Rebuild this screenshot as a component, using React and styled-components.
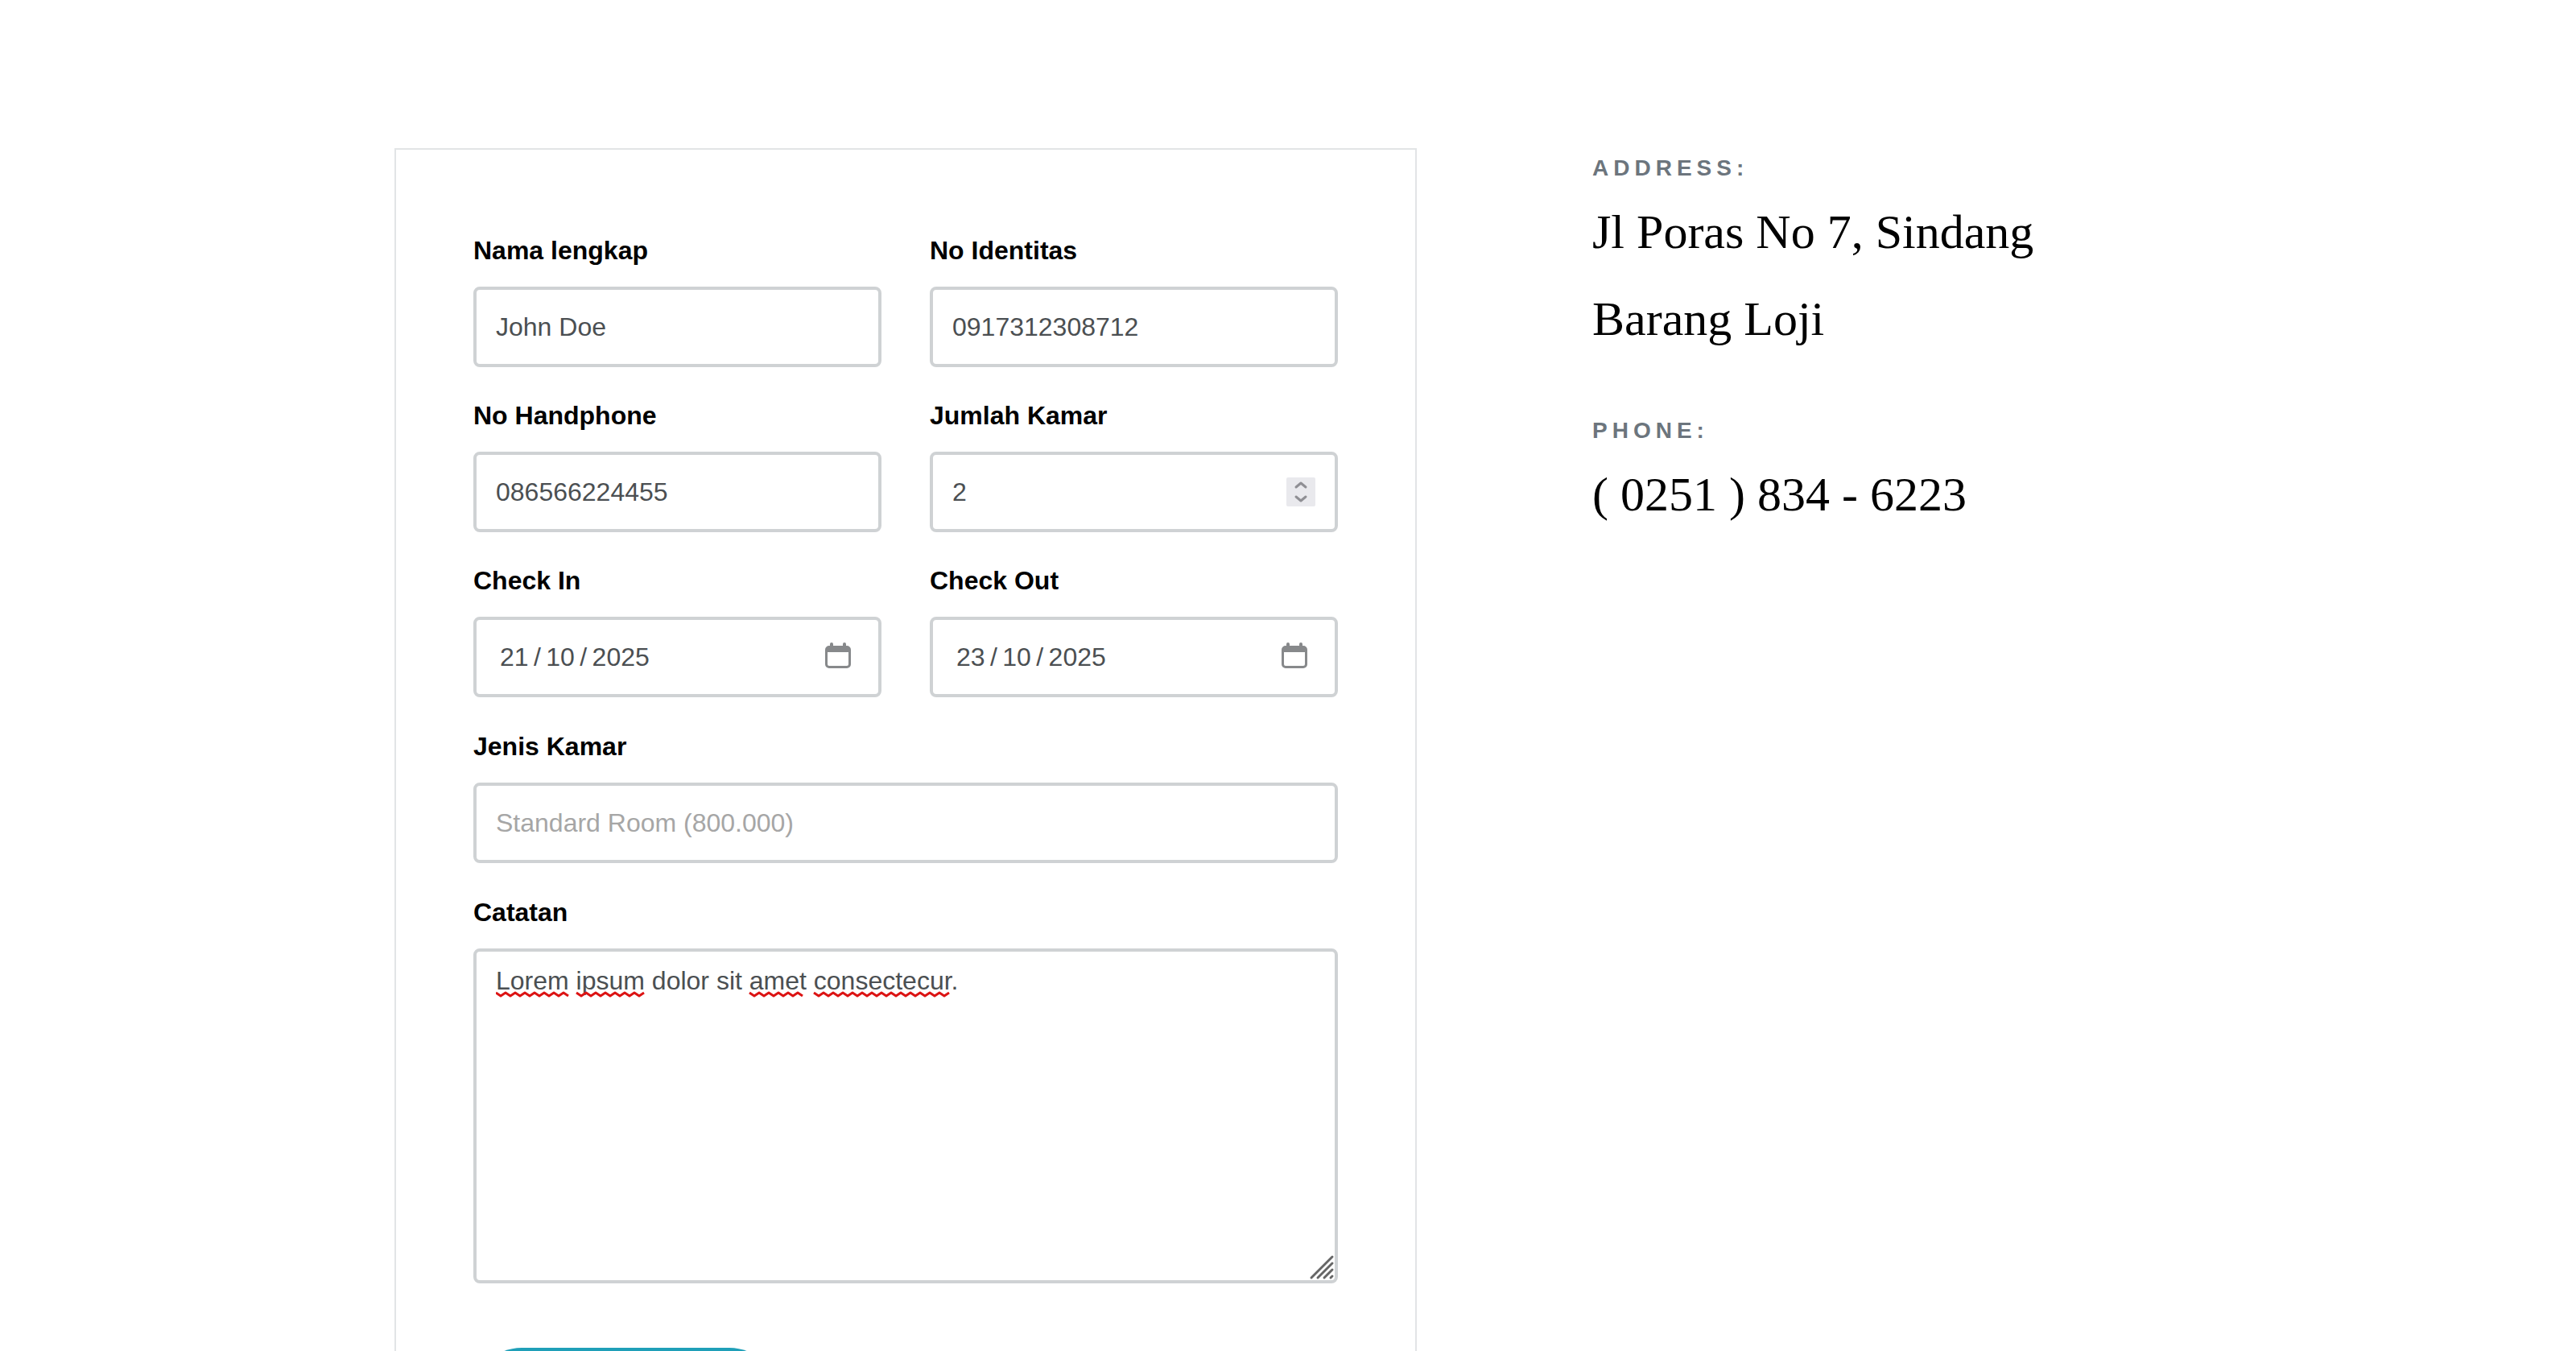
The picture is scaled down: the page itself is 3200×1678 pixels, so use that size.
import React, { useState } from "react";
import styled, { createGlobalStyle, css } from "styled-components";

const sans = '"Liberation Sans", Arial, sans-serif';
const serif = '"Liberation Serif", "Times New Roman", serif';

const GlobalStyle = createGlobalStyle`
  *, *::before, *::after { box-sizing: border-box; }
  html { scrollbar-width: none; }
  body { margin: 0; background: #fff; color: #000; font-family: ${sans}; font-size: 32px; }
`;

const Section = styled.main`
  padding: 184px 0;
`;

const Container = styled.div`
  display: grid;
  grid-template-columns: repeat(12, minmax(0, 1fr));
  column-gap: 60px;
  align-items: start;
  max-width: 2280px;
  margin: 0 auto;
  padding: 0 30px;
`;

const BookingForm = styled.form`
  grid-column: span 7;
  display: flex;
  flex-direction: column;
  gap: 32px;
  padding: 96px;
  border: 2px solid #e2e4e6;
  background: #fff;
`;

const FieldGrid = styled.div`
  display: grid;
  grid-template-columns: 1fr 1fr;
  gap: 31px 60px;
`;

const Field = styled.div`
  display: flex;
  flex-direction: column;
  gap: 16px;
`;

const Label = styled.label`
  font-weight: 700;
  line-height: 58px;
`;

const Control = styled.div`
  position: relative;
  display: flex;
`;

const controlStyle = css`
  flex: 1;
  min-width: 0;
  margin: 0;
  border: 4px solid #cfd2d4;
  border-radius: 8px;
  background: #fff;
  color: #4b4f52;
  font: 32px/48px ${sans};
  outline: none;

  &::placeholder {
    color: #a6a6a6;
    opacity: 1;
  }
`;

const TextInput = styled.input`
  ${controlStyle}
  height: 100px;
  padding: 0 ${(p) => (p.$segmented ? 29 : 24)}px;
  appearance: textfield;

  &::-webkit-inner-spin-button {
    display: none;
  }
`;

const NoteBox = styled.textarea`
  ${controlStyle}
  display: block;
  height: 416px;
  padding: 12px 24px;
  resize: vertical;

  &::-webkit-resizer {
    display: none;
  }
`;

const Stepper = styled.div`
  position: absolute;
  top: 32px;
  right: 28px;
  display: flex;
  flex-direction: column;
  width: 36px;
  height: 36px;
  border-radius: 2px;
  background: #e9e9ed;
`;

const StepButton = styled.button`
  display: block;
  width: 36px;
  height: 18px;
  padding: 0;
  border: 0;
  background: none;

  svg { display: block; }
`;

const CalendarButton = styled.button`
  position: absolute;
  top: 32px;
  right: 38px;
  width: 32px;
  height: 36px;
  padding: 0;
  border: 0;
  background: none;

  svg { display: block; }
`;

const ResizeGrip = styled.svg`
  position: absolute;
  right: 4px;
  bottom: 4px;
  pointer-events: none;
`;

const Squiggle = styled.svg`
  position: absolute;
  top: 53px;
  left: 28px;
  pointer-events: none;
`;

const SubmitButton = styled.button`
  align-self: flex-start;
  min-width: 378px;
  margin-top: 48px;
  padding: 32px 96px;
  border: 0;
  border-radius: 60px;
  background: #1f9fb8;
  color: #fff;
  font: 32px/58px ${sans};
`;

const Contact = styled.aside`
  grid-column: span 5;
  display: flex;
  flex-direction: column;
  gap: 60px;
  padding-left: 158px;
`;

const ContactTitle = styled.h2`
  margin: 0;
  color: #6c757d;
  font-size: 28px;
  font-weight: 700;
  line-height: 50px;
  letter-spacing: 6px;
  text-transform: uppercase;
`;

const ContactText = styled.p`
  margin: 0;
  font-family: ${serif};
  font-size: 60px;
  line-height: 108px;
`;

// Start and end of each word the spelling checker marks, from the text's left edge.
const misspelled = [
  [0, 90],
  [100, 185],
  [315, 386],
  [395, 566],
];

function wave(from, to) {
  let d = `M${from} 2`;
  let down = true;
  for (let x = from + 6; x <= to; x += 6) {
    d += `L${x} ${down ? 6 : 2}`;
    down = !down;
  }
  return d;
}

function SpellingMarks() {
  return (
    <Squiggle width="570" height="8" viewBox="0 0 570 8" aria-hidden="true">
      {misspelled.map(([from, to]) => (
        <path key={from} d={wave(from, to)} fill="none" stroke="#dc1414" strokeWidth="3" strokeLinejoin="round" />
      ))}
    </Squiggle>
  );
}

function CalendarIcon() {
  return (
    <svg width="32" height="36" viewBox="0 0 32 36" aria-hidden="true">
      <path
        fill="#87898b"
        fillRule="evenodd"
        d="M6 4V2a2 2 0 0 1 4 0v2h12V2a2 2 0 0 1 4 0v2h1a5 5 0 0 1 5 5v18a5 5 0 0 1-5 5H5a5 5 0 0 1-5-5V9a5 5 0 0 1 5-5ZM3 12v15a2 2 0 0 0 2 2h22a2 2 0 0 0 2-2V12Z"
      />
    </svg>
  );
}

function Chevron({ d }) {
  return (
    <svg width="36" height="18" viewBox="0 0 36 18" aria-hidden="true">
      <path d={d} fill="none" stroke="#8f8f94" strokeWidth="3" strokeLinecap="round" strokeLinejoin="round" />
    </svg>
  );
}

function TextField({ id, label, initial = "", segmented, children, ...rest }) {
  const [value, setValue] = useState(initial);
  return (
    <Field>
      <Label htmlFor={id}>{label}</Label>
      <Control>
        <TextInput
          id={id}
          name={id}
          value={value}
          $segmented={segmented}
          onChange={(e) => setValue(e.target.value)}
          {...rest}
        />
        {children}
      </Control>
    </Field>
  );
}

function RoomCountField() {
  const [count, setCount] = useState(2);
  return (
    <Field>
      <Label htmlFor="jumlah">Jumlah Kamar</Label>
      <Control>
        <TextInput
          id="jumlah"
          name="jumlah"
          type="number"
          min="1"
          value={count}
          onChange={(e) => setCount(Number(e.target.value))}
        />
        <Stepper>
          <StepButton type="button" aria-label="Tambah kamar" onClick={() => setCount(count + 1)}>
            <Chevron d="M12 12L18 7L24 12" />
          </StepButton>
          <StepButton type="button" aria-label="Kurangi kamar" onClick={() => setCount(Math.max(1, count - 1))}>
            <Chevron d="M12 6L18 11L24 6" />
          </StepButton>
        </Stepper>
      </Control>
    </Field>
  );
}

function DateField({ id, label, initial }) {
  return (
    <TextField id={id} label={label} initial={initial} inputMode="numeric" segmented>
      <CalendarButton type="button" aria-label={`Pilih tanggal ${label}`}>
        <CalendarIcon />
      </CalendarButton>
    </TextField>
  );
}

export default function App() {
  const [note, setNote] = useState("Lorem ipsum dolor sit amet consectecur.");

  return (
    <>
      <GlobalStyle />
      <Section>
        <Container>
          <BookingForm onSubmit={(e) => e.preventDefault()}>
            <FieldGrid>
              <TextField id="nama" label="Nama lengkap" initial="John Doe" />
              <TextField id="identitas" label="No Identitas" initial="0917312308712" />
              <TextField id="handphone" label="No Handphone" initial="086566224455" />
              <RoomCountField />
              <DateField id="checkin" label="Check In" initial={"21\u2009/\u200910\u2009/\u20092025"} />
              <DateField id="checkout" label="Check Out" initial={"23\u2009/\u200910\u2009/\u20092025"} />
            </FieldGrid>
            <TextField id="jenis" label="Jenis Kamar" placeholder="Standard Room (800.000)" />
            <Field>
              <Label htmlFor="catatan">Catatan</Label>
              <Control>
                <NoteBox
                  id="catatan"
                  name="catatan"
                  spellCheck={false}
                  value={note}
                  onChange={(e) => setNote(e.target.value)}
                />
                <SpellingMarks />
                <ResizeGrip width="32" height="32" viewBox="0 0 32 32" aria-hidden="true">
                  <path
                    d="M3 29L29 3M11 29L29 11M19 29L29 19M27 29L29 27"
                    stroke="#666"
                    strokeWidth="3"
                    strokeLinecap="round"
                  />
                </ResizeGrip>
              </Control>
            </Field>
            <SubmitButton type="submit">Reservasi</SubmitButton>
          </BookingForm>
          <Contact>
            <div>
              <ContactTitle>Address:</ContactTitle>
              <ContactText>Jl Poras No 7, Sindang Barang Loji</ContactText>
            </div>
            <div>
              <ContactTitle>Phone:</ContactTitle>
              <ContactText>( 0251 ) 834 - 6223</ContactText>
            </div>
          </Contact>
        </Container>
      </Section>
    </>
  );
}
